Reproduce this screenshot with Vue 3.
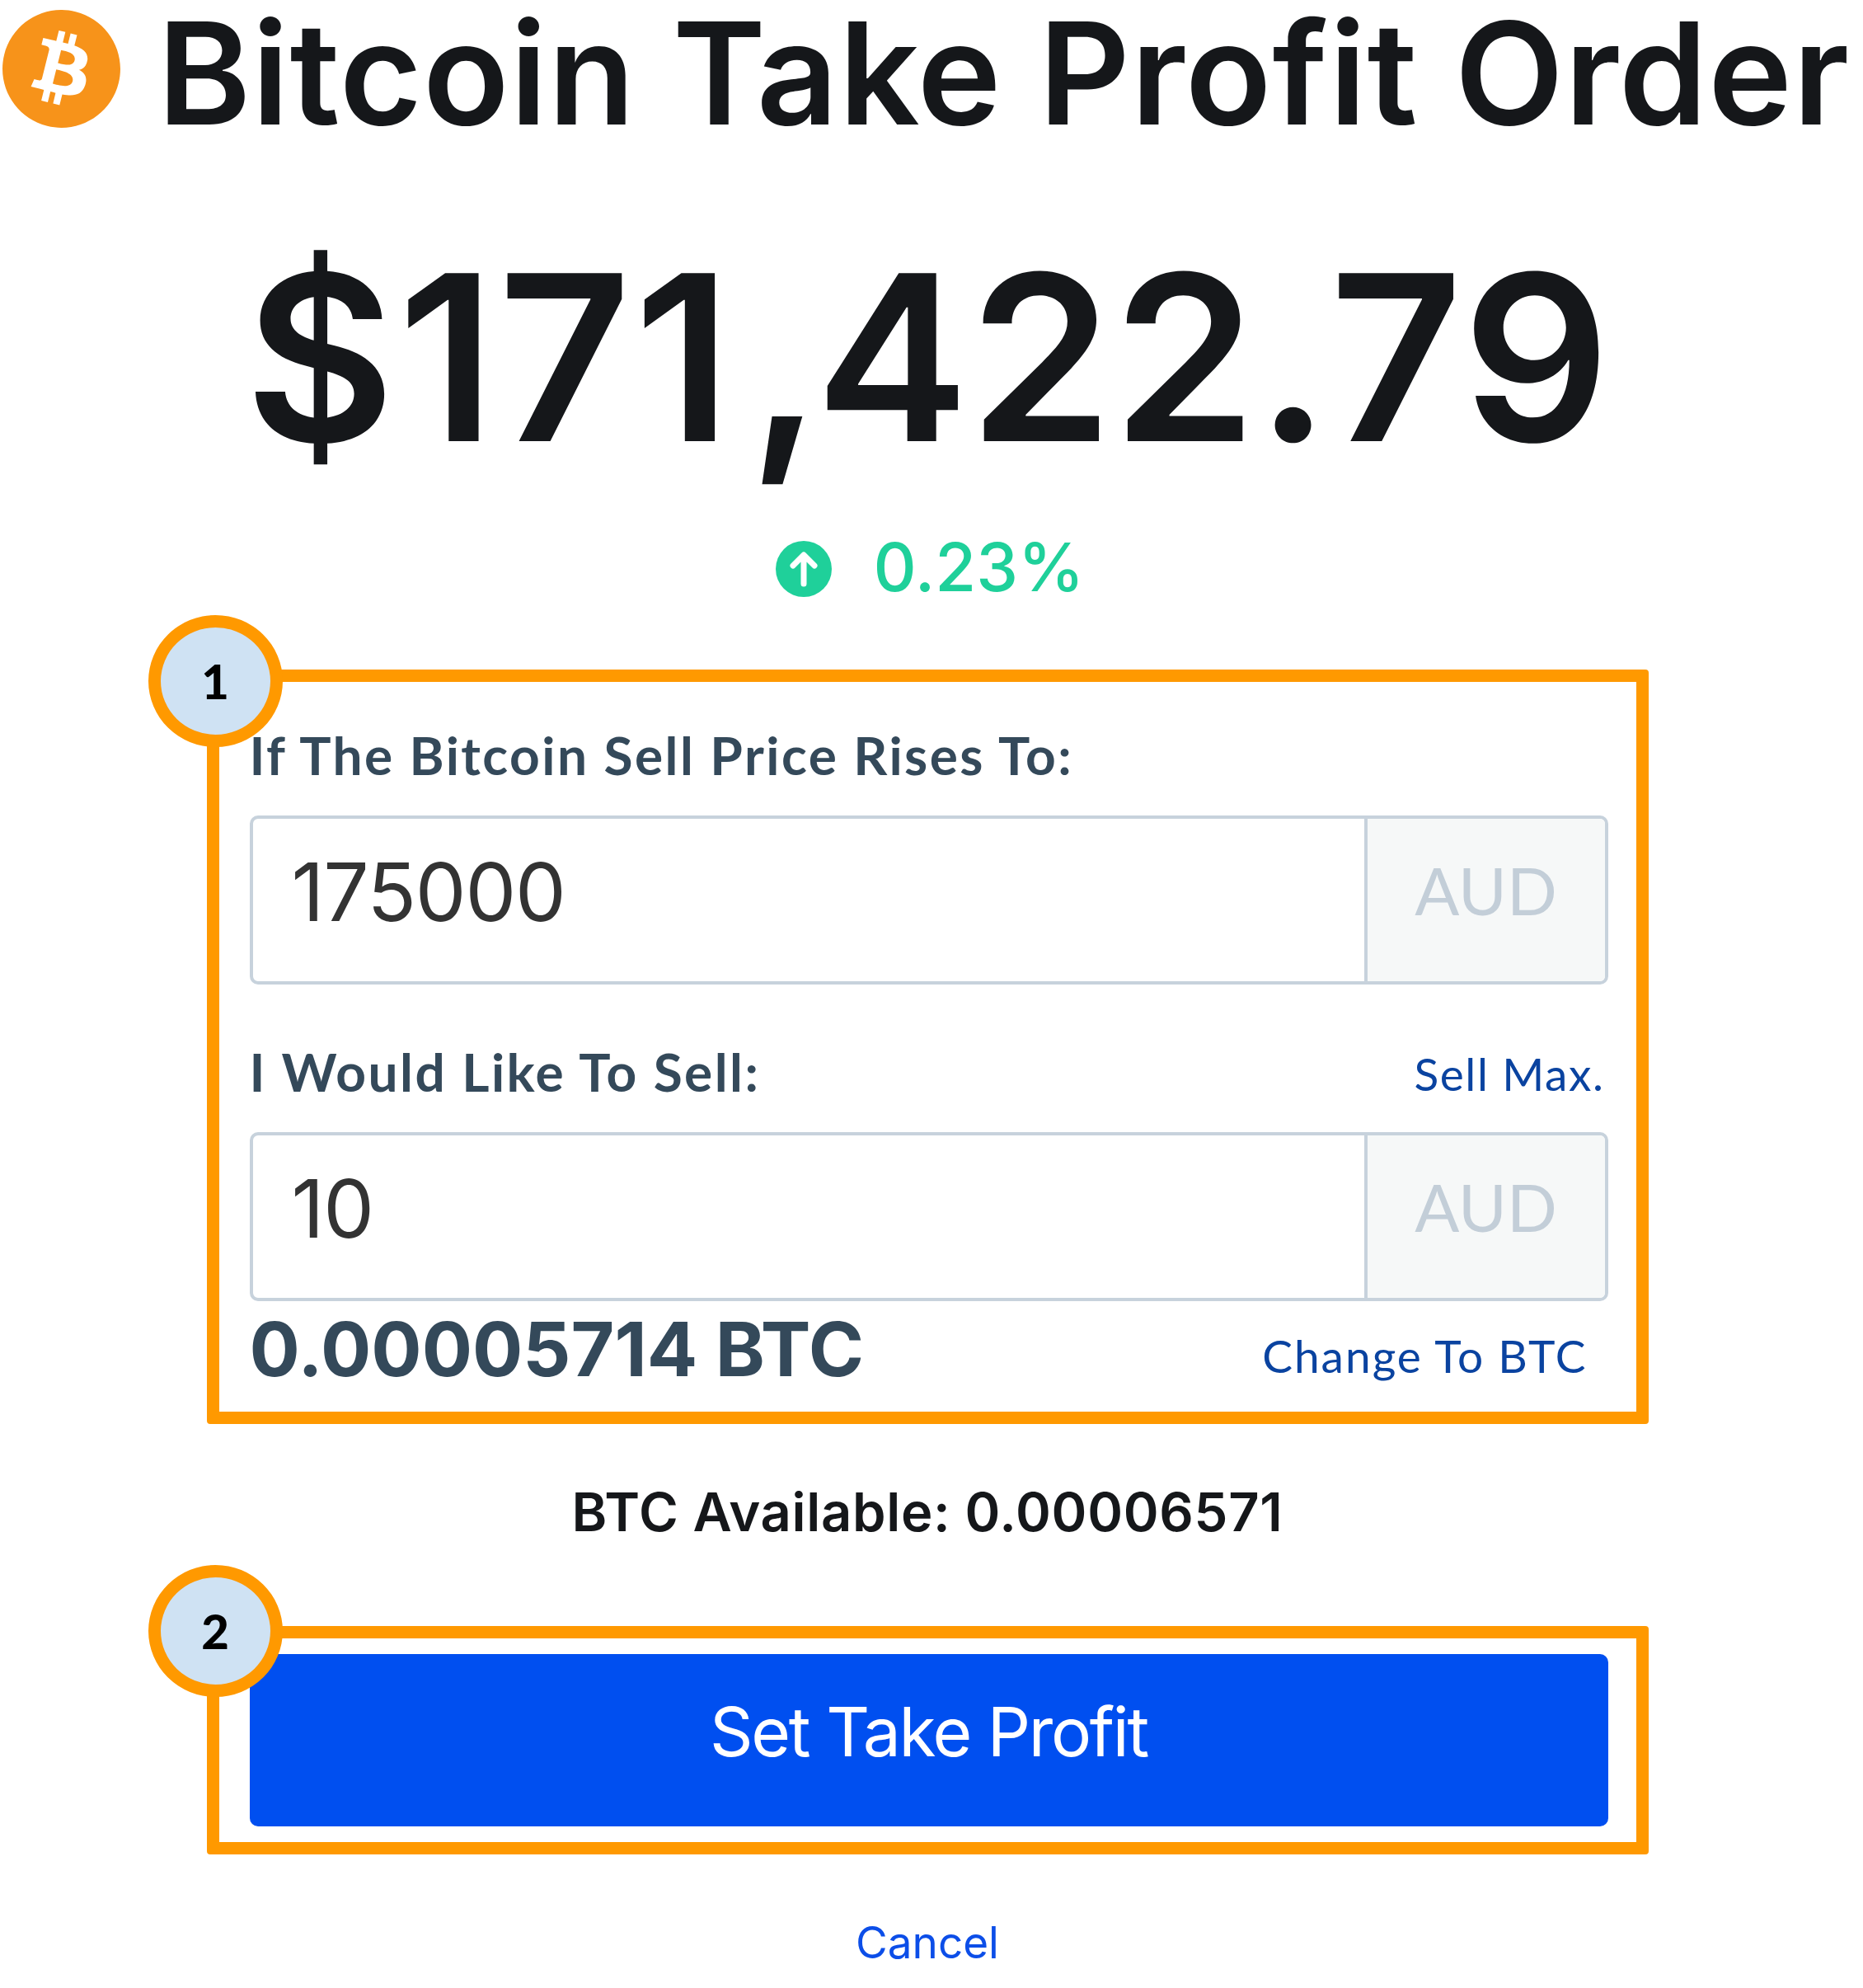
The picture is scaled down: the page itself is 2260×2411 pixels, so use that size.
<script setup>
const fields = [
  { id: 'rise', label: 'If The Bitcoin Sell Price Rises To:', value: '175000', link: '' },
  { id: 'sell', label: 'I Would Like To Sell:', value: '10', link: 'Sell Max.' },
]
</script>

<template>
  <main class="page">
    <header class="head">
      <svg class="coin" viewBox="0 0 24 24" aria-hidden="true">
        <path fill="#f7931a" d="M23.638 14.904c-1.602 6.43-8.113 10.34-14.542 8.736C2.67 22.05-1.244 15.525.362 9.105 1.962 2.67 8.475-1.243 14.9.358c6.43 1.605 10.342 8.115 8.738 14.548v-.002zm-6.35-4.613c.24-1.59-.974-2.45-2.64-3.03l.54-2.153-1.315-.33-.525 2.107c-.345-.087-.705-.167-1.064-.25l.526-2.127-1.32-.33-.54 2.165c-.285-.067-.565-.132-.84-.2l-1.815-.45-.35 1.407s.975.225.955.236c.535.136.63.486.615.766l-1.477 5.92c-.075.166-.24.406-.614.314.015.02-.96-.24-.96-.24l-.66 1.51 1.71.426.93.242-.54 2.19 1.32.327.54-2.17c.36.1.705.19 1.05.273l-.51 2.154 1.32.33.545-2.19c2.24.427 3.93.257 4.64-1.774.57-1.637-.03-2.58-1.217-3.196.854-.193 1.5-.76 1.68-1.93h.01zm-3.01 4.22c-.404 1.64-3.157.75-4.05.53l.72-2.9c.896.23 3.757.67 3.33 2.37zm.41-4.24c-.37 1.49-2.662.735-3.405.55l.654-2.64c.744.18 3.137.524 2.75 2.084v.006z"/>
      </svg>
      <h1 class="title">Bitcoin Take Profit Order</h1>
    </header>

    <div class="price"><span class="whole">$171</span><span class="comma">,</span><span class="rest">422.79</span></div>

    <div class="change">
      <svg class="up" viewBox="0 0 68 68" aria-hidden="true">
        <circle cx="34" cy="34" r="34" fill="#1fd09a"/>
        <path d="M34 52V18M21 30l13-13 13 13" fill="none" stroke="#fff" stroke-width="7" stroke-linecap="round" stroke-linejoin="round"/>
      </svg>
      <span>0.23%</span>
    </div>

    <section class="box box-form">
      <span class="badge">1</span>
      <template v-for="f in fields" :key="f.id">
        <div class="label-row" :class="'label-' + f.id">
          <span class="label">{{ f.label }}</span>
          <a v-if="f.link" class="link">{{ f.link }}</a>
        </div>
        <div class="field">
          <div class="value">{{ f.value }}</div>
          <div class="addon">AUD</div>
        </div>
      </template>
      <div class="convert">
        <span class="btc">0.00005714 BTC</span>
        <a class="link change-link">Change To BTC</a>
      </div>
    </section>

    <p class="avail">BTC Available: 0.00006571</p>

    <section class="box box-btn">
      <span class="badge badge-high">2</span>
      <button class="submit">Set Take Profit</button>
    </section>

    <a class="cancel">Cancel</a>
  </main>
</template>

<style scoped>
.page {
  box-sizing: border-box;
  width: 2260px;
  height: 2411px;
  padding-right: 10px;
  overflow: hidden;
  background: #fff;
  display: flex;
  flex-direction: column;
  align-items: center;
  font-family: Inter, "Liberation Sans", sans-serif;
}
.head {
  align-self: flex-start;
  height: 284px;
  display: flex;
  align-items: flex-start;
  padding-left: 3px;
}
.coin {
  width: 143px;
  height: 143px;
  margin-top: 12px;
  flex: none;
}
.title {
  margin: 0 0 0 45px;
  font-size: 172px;
  line-height: 176px;
  font-weight: 590;
  letter-spacing: 1.1px;
  color: #15171a;
  white-space: nowrap;
}
.price {
  height: 363px;
  font-size: 280px;
  line-height: 300px;
  font-weight: 600;
  font-kerning: none;
  color: #15171a;
  white-space: nowrap;
}
.whole {
  letter-spacing: 3.4px;
}
.comma {
  margin: 0 -8px 0 17px;
}
.rest {
  letter-spacing: -0.2px;
}
.change {
  height: 165px;
  margin-left: 6px;
  display: flex;
  align-items: flex-start;
  gap: 51px;
  color: #1fd09a;
  font-size: 81px;
  line-height: 83px;
  font-weight: 500;
}
.up {
  width: 68px;
  height: 68px;
  margin-top: 9px;
}
.box {
  position: relative;
  box-sizing: border-box;
  width: 1749px;
  border: 15px solid #ff9900;
  border-radius: 4px;
  padding: 0 34px 0 37px;
}
.box-form {
  height: 915px;
}
.badge {
  position: absolute;
  left: -86px;
  top: -81px;
  box-sizing: border-box;
  width: 163px;
  height: 160px;
  padding-bottom: 2px;
  border: 15px solid #ff9900;
  border-radius: 50%;
  background: #cfe2f3;
  display: flex;
  align-items: center;
  justify-content: center;
  font-family: Lato, sans-serif;
  font-weight: 900;
  font-size: 58px;
  color: #000;
}
.badge-high {
  top: -89px;
}
.label-row {
  display: flex;
  justify-content: space-between;
  align-items: flex-end;
  box-sizing: border-box;
  padding-bottom: 33px;
  font-family: Lato, sans-serif;
}
.label-row .link {
  margin: 0 4px 3px 0;
}
.label-rise {
  height: 162px;
}
.label-sell {
  height: 179px;
}
.label {
  font-size: 64px;
  line-height: 80px;
  font-weight: 700;
  letter-spacing: 2.45px;
  color: #34495a;
}
.link {
  font-family: Lato, sans-serif;
  font-size: 55px;
  line-height: 70px;
  letter-spacing: 1.6px;
  color: #0a43a0;
}
.field {
  box-sizing: border-box;
  height: 205px;
  display: flex;
  border: 4px solid #c7d2dc;
  border-radius: 10px;
}
.value {
  flex: 1;
  padding: 39px 0 0 47px;
  font-size: 98px;
  line-height: 100px;
  letter-spacing: -1.2px;
  color: #333;
}
.addon {
  box-sizing: border-box;
  width: 292px;
  border-left: 4px solid #c7d2dc;
  border-radius: 0 6px 6px 0;
  background: #f6f8f8;
  padding-top: 31px;
  text-align: center;
  font-family: Lato, sans-serif;
  font-size: 80px;
  line-height: 110px;
  color: #c3ced8;
}
.convert {
  display: flex;
  justify-content: space-between;
  align-items: center;
  padding-right: 25px;
  height: 116px;
}
.btc {
  font-size: 91px;
  line-height: 116px;
  font-weight: 700;
  color: #34495a;
}
.change-link {
  margin-top: 16px;
  letter-spacing: 2px;
}
.avail {
  margin: 0;
  height: 245px;
  padding-top: 62px;
  box-sizing: border-box;
  font-size: 65px;
  line-height: 90px;
  font-weight: 570;
  letter-spacing: 0.7px;
  color: #15171a;
}
.box-btn {
  height: 277px;
  padding-top: 19px;
}
.submit {
  display: block;
  width: 100%;
  height: 209px;
  padding: 0 0 20px;
  border: 0;
  border-radius: 10px;
  background: #004ff0;
  color: #fff;
  font-family: Inter, sans-serif;
  font-size: 82px;
  letter-spacing: -2.3px;
  font-weight: 400;
}
.cancel {
  margin-top: 72px;
  font-size: 53px;
  line-height: 70px;
  color: #0c4ee8;
}
</style>
